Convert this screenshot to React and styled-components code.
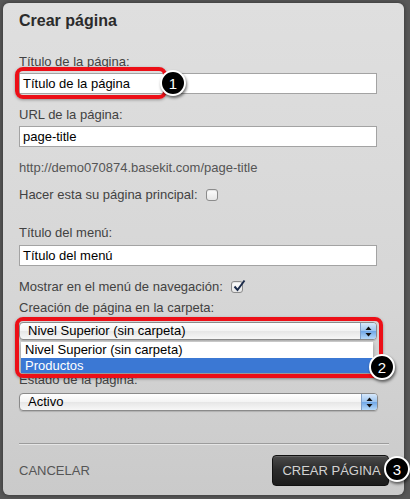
import React from 'react';
import styled, { createGlobalStyle } from 'styled-components';

const GlobalStyle = createGlobalStyle`
	html, body {
		margin: 0;
		padding: 0;
		height: 499px;
		overflow: hidden;
		background: #585858;
		font-family: 'Liberation Sans', Arial, sans-serif;
	}
`;

const Panel = styled.div`
	position: relative;
	box-sizing: border-box;
	margin: 3px 0 0 3px;
	width: 401px;
	height: 492px;
	padding: 0 15px 0 16px;
	border-radius: 6px;
	background: linear-gradient(#dfdfdf, #d6d6d6 60%, #cacaca);
	box-shadow: 0 0 5px rgba(0, 0, 0, 0.45);
	display: flex;
	flex-direction: column;
`;

const Title = styled.h1`
	margin: 8px 0 0;
	font-size: 16px;
	line-height: 20px;
	font-weight: bold;
	color: #2b2b2b;
`;

const Label = styled.div`
	margin-top: ${(p) => p.$top}px;
	font-size: 13px;
	line-height: 16px;
	color: ${(p) => (p.$muted ? '#555' : '#424242')};
	display: flex;
	align-items: center;
`;

const TextInput = styled.div`
	box-sizing: border-box;
	margin-top: ${(p) => p.$top}px;
	width: 358px;
	height: 21px;
	padding-left: 3px;
	border: 1px solid #a3a3a3;
	background: #fff;
	font-size: 13px;
	line-height: 19px;
	color: #000;
`;

const Checkbox = styled.span`
	box-sizing: border-box;
	display: inline-flex;
	align-items: center;
	justify-content: center;
	margin-left: 8px;
	width: 12px;
	height: 12px;
	border: 1px solid #8c8c8c;
	border-radius: 3px;
	background: linear-gradient(#fdfdfd, #e6e6e6);
	box-shadow: inset 0 1px 1px rgba(0, 0, 0, 0.1);
	position: relative;
`;

const Check = styled.svg`
	position: absolute;
	left: 0;
	top: -3px;
	width: 14px;
	height: 14px;
`;

const Select = styled.div`
	box-sizing: border-box;
	margin-top: ${(p) => p.$top}px;
	width: ${(p) => p.$width}px;
	height: 18px;
	border: 1px solid #8a8a8a;
	border-radius: 4px;
	background: linear-gradient(#ffffff, #f3f3f3 50%, #e6e6e6 51%, #f7f7f7);
	box-shadow: 0 1px 1px rgba(0, 0, 0, 0.15);
	display: flex;
	align-items: center;
	overflow: hidden;
	font-size: 13px;
	color: #000;
`;

const SelectText = styled.span`
	flex: 1;
	padding-left: 8px;
	line-height: 16px;
`;

const Arrows = styled.span`
	width: 15px;
	height: 100%;
	border-left: 1px solid #7f9fc8;
	background: linear-gradient(#d6e8fb, #9cc4ef 50%, #6fa6e6 51%, #b7dafa);
	display: flex;
	align-items: center;
	justify-content: center;
`;

const Separator = styled.div`
	margin-top: 32px;
	height: 1px;
	background: #9c9c9c;
	border-bottom: 1px solid #e6e6e6;
`;

const Footer = styled.div`
	margin-top: 10px;
	display: flex;
	align-items: center;
	justify-content: space-between;
`;

const Cancel = styled.span`
	font-size: 13px;
	color: #555;
`;

const PrimaryButton = styled.div`
	box-sizing: border-box;
	width: 117px;
	height: 31px;
	border: 1px solid #111;
	border-radius: 4px;
	background: linear-gradient(#4a4a4a, #2a2a2a 50%, #1c1c1c);
	box-shadow: inset 0 1px 0 rgba(255, 255, 255, 0.15);
	color: #d2d2d2;
	font-size: 13px;
	display: flex;
	align-items: center;
	justify-content: center;
	padding-left: 2px;
`;

const Dropdown = styled.div`
	position: absolute;
	left: 18px;
	top: 339px;
	width: 352px;
	background: #fff;
	box-shadow: 0 2px 4px rgba(0, 0, 0, 0.35);
	font-size: 13px;
`;

const Option = styled.div`
	height: ${(p) => p.$h}px;
	line-height: ${(p) => p.$h}px;
	padding-left: 4px;
	color: ${(p) => (p.$active ? '#fff' : '#000')};
	background: ${(p) => (p.$active ? '#3b78d4' : '#fff')};
`;

const Highlight = styled.div`
	position: absolute;
	box-sizing: border-box;
	left: ${(p) => p.$x}px;
	top: ${(p) => p.$y}px;
	width: ${(p) => p.$w}px;
	height: ${(p) => p.$h}px;
	border: 4px solid #ec0f17;
	border-radius: 8px;
	box-shadow: 0 1px 3px rgba(0, 0, 0, 0.35);
`;

const Badge = styled.div`
	position: absolute;
	box-sizing: border-box;
	left: ${(p) => p.$x - 13}px;
	top: ${(p) => p.$y - 13}px;
	width: 26px;
	height: 26px;
	border: 2px solid #fff;
	border-radius: 50%;
	background: #000;
	box-shadow: 1px 2px 3px rgba(0, 0, 0, 0.55);
	color: #fff;
	font-size: 15px;
	display: flex;
	align-items: center;
	justify-content: center;
`;

const ArrowIcon = () => (
	<svg width="7" height="11" viewBox="0 0 7 11">
		<path d="M3.5 0.5 L6.5 4 L0.5 4 Z" fill="#111" />
		<path d="M0.5 7 L6.5 7 L3.5 10.5 Z" fill="#111" />
	</svg>
);

const CheckMark = () => (
	<Check viewBox="0 0 14 14">
		<path d="M2.5 7.5 L5.5 11 L12.5 1.5" fill="none" stroke="#1b2b4a" strokeWidth="2" />
	</Check>
);

export default function App() {
	return (
		<>
			<GlobalStyle />
			<Panel>
				<Title>Crear página</Title>

				<Label $top={23}>Título de la página:</Label>
				<TextInput $top={3}>Título de la página</TextInput>

				<Label $top={13}>URL de la página:</Label>
				<TextInput $top={3}>page-title</TextInput>

				<Label $top={13} $muted>
					http://demo070874.basekit.com/page-title
				</Label>

				<Label $top={11}>
					Hacer esta su página principal:
					<Checkbox />
				</Label>

				<Label $top={22}>Título del menú:</Label>
				<TextInput $top={4}>Título del menú</TextInput>

				<Label $top={13}>
					Mostrar en el menú de navegación:
					<Checkbox>
						<CheckMark />
					</Checkbox>
				</Label>

				<Label $top={5}>Creación de página en la carpeta:</Label>
				<Select $top={6} $width={358}>
					<SelectText>Nivel Superior (sin carpeta)</SelectText>
					<Arrows>
						<ArrowIcon />
					</Arrows>
				</Select>

				<Label $top={32}>Estado de la página:</Label>
				<Select $top={5} $width={359}>
					<SelectText>Activo</SelectText>
					<Arrows>
						<ArrowIcon />
					</Arrows>
				</Select>

				<Separator />

				<Footer>
					<Cancel>CANCELAR</Cancel>
					<PrimaryButton>CREAR PÁGINA</PrimaryButton>
				</Footer>

				<Dropdown>
					<Option $h={16}>Nivel Superior (sin carpeta)</Option>
					<Option $h={15} $active>
						Productos
					</Option>
				</Dropdown>

				<Highlight $x={12} $y={64} $w={152} $h={32} />
				<Highlight $x={12} $y={314} $w={368} $h={61} />

				<Badge $x={170} $y={80}>1</Badge>
				<Badge $x={379} $y={364}>2</Badge>
				<Badge $x={394} $y={466}>3</Badge>
			</Panel>
		</>
	);
}
